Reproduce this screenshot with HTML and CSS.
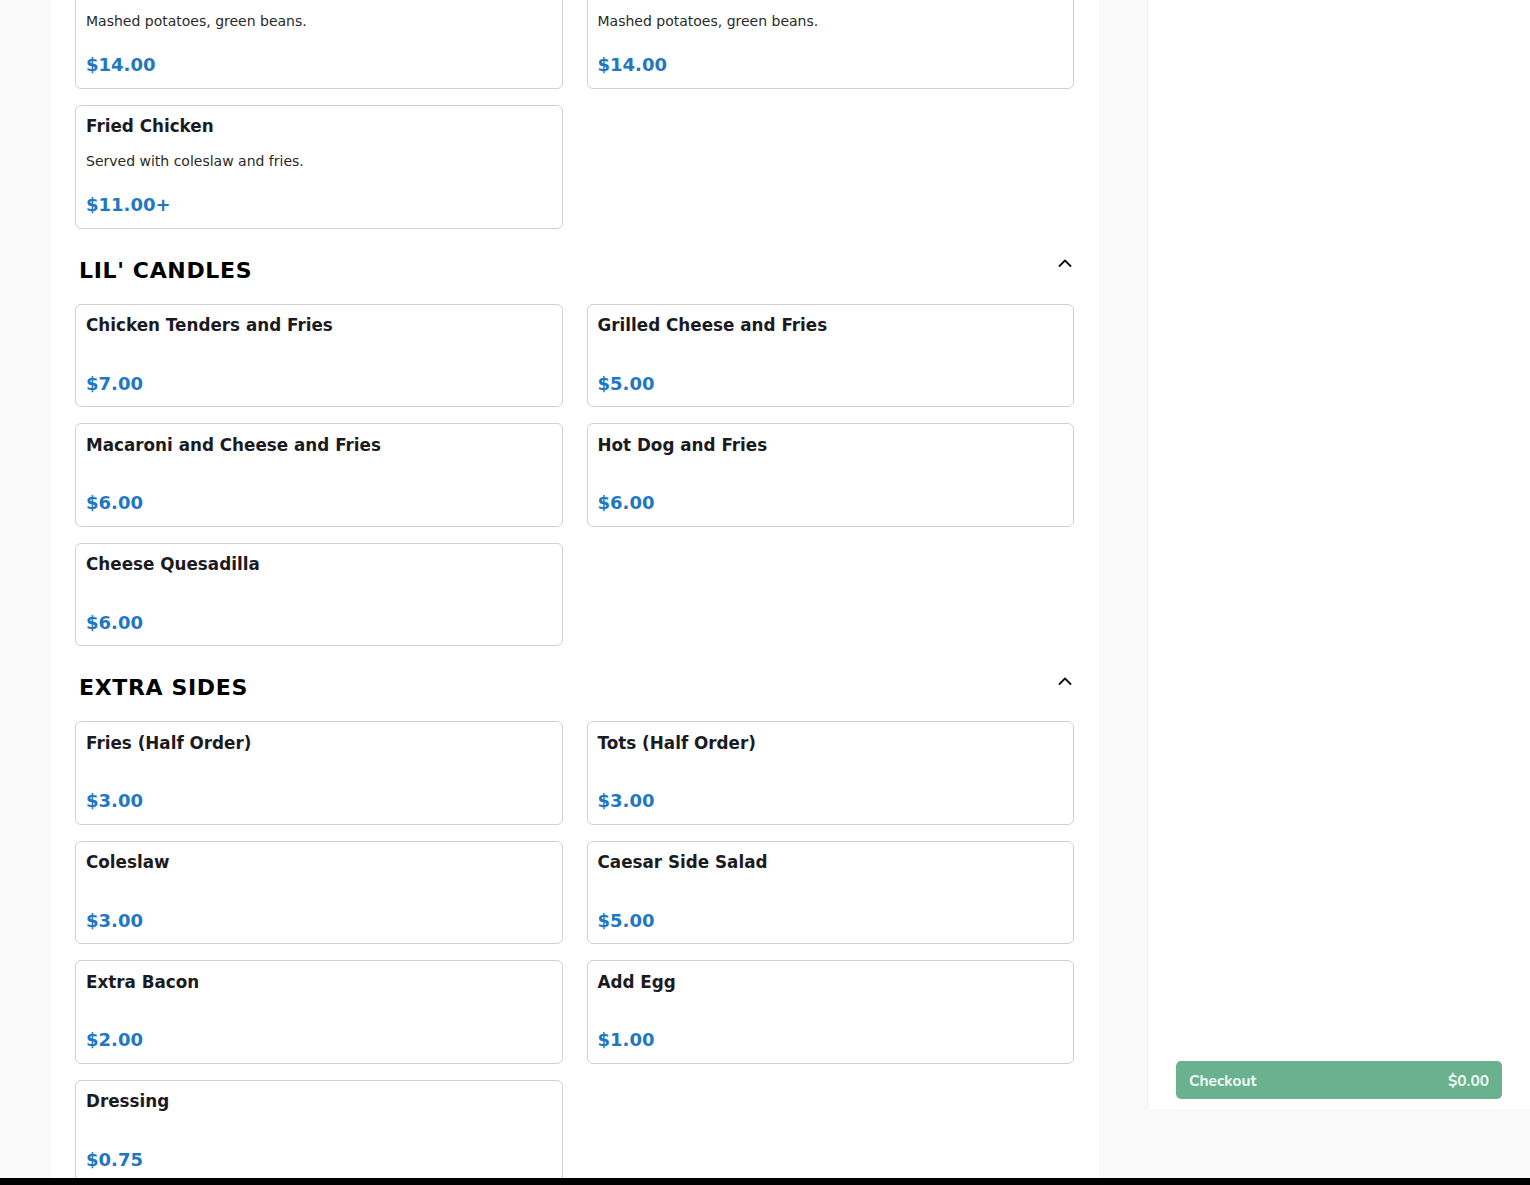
FILE: index.html
```html
<!DOCTYPE html>
<html lang="en">
<head>
<meta charset="utf-8">
<title>Menu</title>
<link rel="stylesheet" href="styles.css">
</head>
<body>
<div class="frame">
  <main class="menu">
    <div class="menu-inner">
      <div class="grid">
        <div class="card">
          <div class="card-title">Pot Roast</div>
          <div class="desc">Mashed potatoes, green beans.</div>
          <div class="price">$14.00</div>
        </div>
        <div class="card">
          <div class="card-title">Meatloaf</div>
          <div class="desc">Mashed potatoes, green beans.</div>
          <div class="price">$14.00</div>
        </div>
        <div class="card">
          <div class="card-title">Fried Chicken</div>
          <div class="desc">Served with coleslaw and fries.</div>
          <div class="price">$11.00+</div>
        </div>
      </div>

      <section class="section">
        <div class="section-head">
          <h2 class="section-title">LIL' CANDLES</h2>
          <svg class="chevron" width="14" height="8" viewBox="0 0 14 8"><polyline points="1.5,7 7,1.5 12.5,7" fill="none" stroke="#111" stroke-width="1.8" stroke-linecap="round" stroke-linejoin="round"/></svg>
        </div>
        <div class="grid">
          <div class="card"><div class="card-title">Chicken Tenders and Fries</div><div class="price">$7.00</div></div>
          <div class="card"><div class="card-title">Grilled Cheese and Fries</div><div class="price">$5.00</div></div>
          <div class="card"><div class="card-title">Macaroni and Cheese and Fries</div><div class="price">$6.00</div></div>
          <div class="card"><div class="card-title">Hot Dog and Fries</div><div class="price">$6.00</div></div>
          <div class="card"><div class="card-title">Cheese Quesadilla</div><div class="price">$6.00</div></div>
        </div>
      </section>

      <section class="section">
        <div class="section-head">
          <h2 class="section-title">EXTRA SIDES</h2>
          <svg class="chevron" width="14" height="8" viewBox="0 0 14 8"><polyline points="1.5,7 7,1.5 12.5,7" fill="none" stroke="#111" stroke-width="1.8" stroke-linecap="round" stroke-linejoin="round"/></svg>
        </div>
        <div class="grid">
          <div class="card"><div class="card-title">Fries (Half Order)</div><div class="price">$3.00</div></div>
          <div class="card"><div class="card-title">Tots (Half Order)</div><div class="price">$3.00</div></div>
          <div class="card"><div class="card-title">Coleslaw</div><div class="price">$3.00</div></div>
          <div class="card"><div class="card-title">Caesar Side Salad</div><div class="price">$5.00</div></div>
          <div class="card"><div class="card-title">Extra Bacon</div><div class="price">$2.00</div></div>
          <div class="card"><div class="card-title">Add Egg</div><div class="price">$1.00</div></div>
          <div class="card"><div class="card-title">Dressing</div><div class="price">$0.75</div></div>
        </div>
      </section>
    </div>
  </main>
  <aside class="cart">
    <button class="checkout" type="button">
      <span>Checkout</span>
      <span>$0.00</span>
    </button>
  </aside>
</div>
<div class="bottom-bar"></div>
</body>
</html>
```

FILE: styles.css
```css
html, body {
  margin: 0;
  padding: 0;
}

body {
  background: #000;
  height: 1185px;
  overflow: hidden;
  font-family: "DejaVu Sans", "Liberation Sans", sans-serif;
}

.frame {
  height: 1178px;
  display: flex;
  align-items: flex-start;
  background: #f9f9f9;
  overflow: hidden;
}

.menu {
  margin-left: 51px;
  width: 1048px;
  height: 1178px;
  box-sizing: border-box;
  padding: 0 25px 0 24px;
  background: #fff;
  overflow: hidden;
}

.menu-inner {
  margin-top: -35.5px;
}

.grid {
  display: grid;
  grid-template-columns: 1fr 1fr;
  column-gap: 24px;
  row-gap: 16px;
}

.card {
  border: 1px solid #d0d0d0;
  border-radius: 6px;
  padding: 10.5px 10px 12.5px 10px;
  background: #fff;
}

.card-title {
  font-size: 16.8px;
  font-weight: bold;
  color: #1b1b1f;
}

.desc {
  margin-top: 17px;
  font-size: 14px;
  color: #2a2a2a;
}

.price {
  margin-top: 37.5px;
  font-size: 18px;
  font-weight: bold;
  color: #2177c2;
}

.desc + .price {
  margin-top: 25px;
}

.section-head {
  display: flex;
  justify-content: space-between;
  align-items: flex-start;
  margin: 29px 0 21px;
  padding: 0 2px 0 4px;
}

.section-title {
  margin: 0;
  font-size: 22px;
  font-weight: bold;
  letter-spacing: 0.65px;
  color: #000;
}

.chevron {
  display: block;
  margin-top: 1.5px;
}

.cart {
  margin-left: 48px;
  width: 383px;
  height: 1109px;
  box-sizing: border-box;
  background: #fff;
  border-left: 1px solid #f1f1f1;
  display: flex;
  flex-direction: column;
  justify-content: flex-end;
  padding: 0 28px 10px 28px;
}

.checkout {
  display: flex;
  justify-content: space-between;
  align-items: center;
  height: 38px;
  width: 100%;
  padding: 0 13px;
  border: none;
  border-radius: 5px;
  background: #69b18f;
  color: #f4faf7;
  font-family: "Nunito", "Lato", "Open Sans", sans-serif;
  font-size: 15.5px;
  font-weight: bold;
}

.bottom-bar {
  height: 7px;
  background: #000;
}
```
